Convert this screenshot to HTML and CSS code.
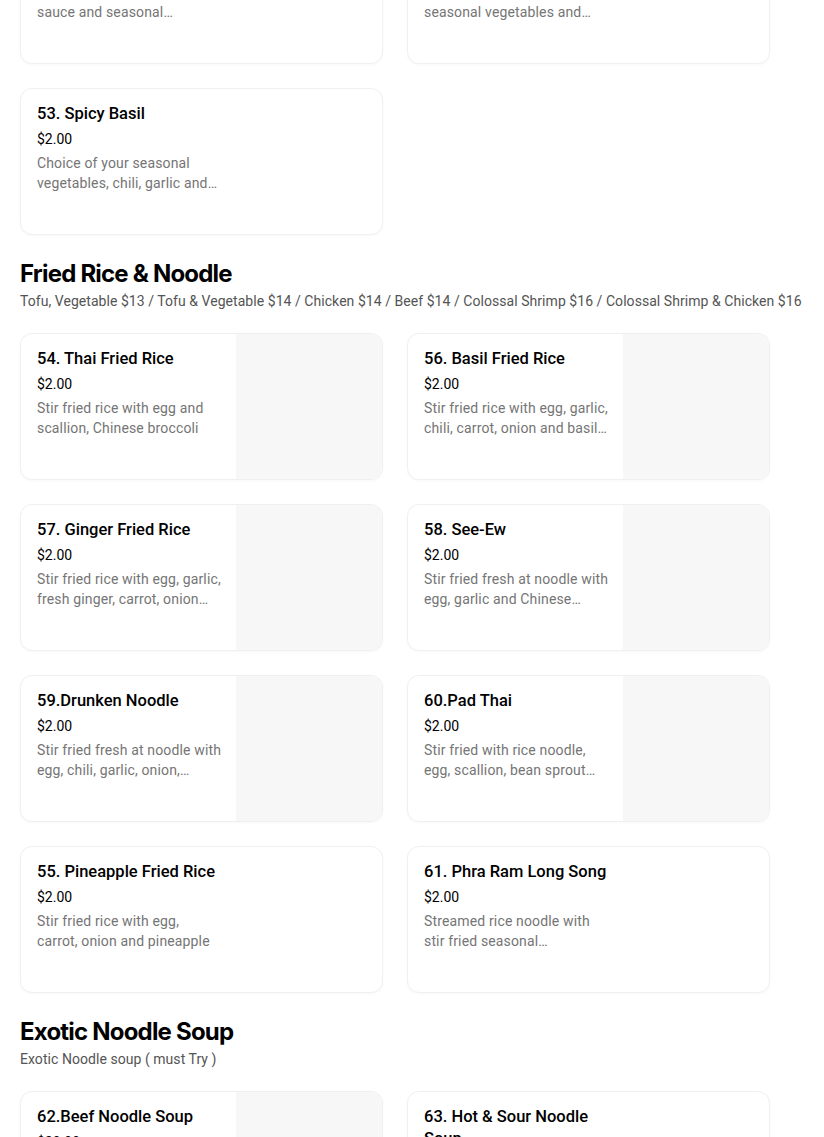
FILE: index.html
```html
<!DOCTYPE html>
<html lang="en">
<head>
<meta charset="utf-8">
<title>Menu</title>
<link rel="stylesheet" href="styles.css">
</head>
<body>
<main class="menu">
  <section class="category category--cut">
    <div class="grid">
      <article class="card">
        <div class="info">
          <h3 class="title">51. Garlic Sauce</h3>
          <div class="price">$2.00</div>
          <p class="desc">Stir fried with garlic pepper sauce and seasonal vegetables on the side</p>
        </div>
      </article>
      <article class="card">
        <div class="info">
          <h3 class="title">52. Ginger Sauce</h3>
          <div class="price">$2.00</div>
          <p class="desc">Stir fried with ginger, onion, seasonal vegetables and mushroom</p>
        </div>
      </article>
      <article class="card">
        <div class="info">
          <h3 class="title">53. Spicy Basil</h3>
          <div class="price">$2.00</div>
          <p class="desc">Choice of your seasonal vegetables, chili, garlic and basil leaves</p>
        </div>
      </article>
    </div>
  </section>

  <section class="category">
    <h2 class="cat-title">Fried Rice &amp; Noodle</h2>
    <p class="cat-sub">Tofu, Vegetable $13 / Tofu &amp; Vegetable $14 / Chicken $14 / Beef $14 / Colossal Shrimp $16 / Colossal Shrimp &amp; Chicken $16</p>
    <div class="grid">
      <article class="card">
        <div class="info">
          <h3 class="title">54. Thai Fried Rice</h3>
          <div class="price">$2.00</div>
          <p class="desc">Stir fried rice with egg and scallion, Chinese broccoli</p>
        </div>
        <div class="thumb"></div>
      </article>
      <article class="card">
        <div class="info">
          <h3 class="title">56. Basil Fried Rice</h3>
          <div class="price">$2.00</div>
          <p class="desc">Stir fried rice with egg, garlic, chili, carrot, onion and basil leaves</p>
        </div>
        <div class="thumb"></div>
      </article>
      <article class="card">
        <div class="info">
          <h3 class="title">57. Ginger Fried Rice</h3>
          <div class="price">$2.00</div>
          <p class="desc">Stir fried rice with egg, garlic, fresh ginger, carrot, onion and scallion</p>
        </div>
        <div class="thumb"></div>
      </article>
      <article class="card">
        <div class="info">
          <h3 class="title">58. See-Ew</h3>
          <div class="price">$2.00</div>
          <p class="desc">Stir fried fresh at noodle with egg, garlic and Chinese broccoli in sweet soy sauce</p>
        </div>
        <div class="thumb"></div>
      </article>
      <article class="card">
        <div class="info">
          <h3 class="title">59.Drunken Noodle</h3>
          <div class="price">$2.00</div>
          <p class="desc">Stir fried fresh at noodle with egg, chili, garlic, onion, tomato and basil leaves</p>
        </div>
        <div class="thumb"></div>
      </article>
      <article class="card">
        <div class="info">
          <h3 class="title">60.Pad Thai</h3>
          <div class="price">$2.00</div>
          <p class="desc">Stir fried with rice noodle, egg, scallion, bean sprout and ground peanuts</p>
        </div>
        <div class="thumb"></div>
      </article>
      <article class="card">
        <div class="info">
          <h3 class="title">55. Pineapple Fried Rice</h3>
          <div class="price">$2.00</div>
          <p class="desc">Stir fried rice with egg, carrot, onion and pineapple</p>
        </div>
      </article>
      <article class="card">
        <div class="info">
          <h3 class="title">61. Phra Ram Long Song</h3>
          <div class="price">$2.00</div>
          <p class="desc">Streamed rice noodle with stir fried seasonal vegetables topped with peanut sauce</p>
        </div>
      </article>
    </div>
  </section>

  <section class="category">
    <h2 class="cat-title">Exotic Noodle Soup</h2>
    <p class="cat-sub">Exotic Noodle soup ( must Try )</p>
    <div class="grid">
      <article class="card">
        <div class="info">
          <h3 class="title">62.Beef Noodle Soup</h3>
          <div class="price">$20.00</div>
          <p class="desc">Rice noodle soup with braised beef, bean sprout and Chinese broccoli</p>
        </div>
        <div class="thumb"></div>
      </article>
      <article class="card">
        <div class="info">
          <h3 class="title">63. Hot &amp; Sour Noodle Soup</h3>
          <div class="price">$20.00</div>
          <p class="desc">Rice noodle soup with ground peanut, chili and lime</p>
        </div>
      </article>
    </div>
  </section>
</main>
</body>
</html>
```

FILE: styles.css
```css
* {
  box-sizing: border-box;
}

html, body {
  margin: 0;
  padding: 0;
  background: #ffffff;
}

body {
  font-family: Roboto, "Liberation Sans", sans-serif;
  color: #000000;
  overflow: hidden;
}

.menu {
  padding: 0 20px;
  margin-top: -83px;
}

.category {
  padding-top: 23px;
}

.category--cut {
  padding-top: 0;
}

.cat-title {
  margin: 0;
  font-family: Inter, "Liberation Sans", sans-serif;
  font-size: 24px;
  line-height: 32px;
  font-weight: 700;
  letter-spacing: -0.8px;
}

.cat-sub {
  margin: 1px 0 22px;
  font-size: 14px;
  line-height: 20px;
  color: #545454;
  white-space: nowrap;
  letter-spacing: 0.05px;
}

.grid {
  display: grid;
  grid-template-columns: repeat(2, 363px);
  gap: 24px;
}

.card {
  display: flex;
  height: 147px;
  border: 1px solid #f0f0f0;
  border-radius: 12px;
  box-shadow: 0 1px 3px rgba(0, 0, 0, 0.03);
  overflow: hidden;
  background: #fff;
}

.info {
  width: 201px;
  flex: none;
  padding: 14px 0 0 16px;
}

.title {
  margin: 0;
  font-size: 16.5px;
  line-height: 22px;
  font-weight: 500;
}

.price {
  margin-top: 4px;
  font-size: 14px;
  line-height: 20px;
}

.desc {
  margin: 4px 0 0;
  font-size: 14px;
  line-height: 20px;
  color: #757575;
  letter-spacing: 0.15px;
  display: -webkit-box;
  -webkit-line-clamp: 2;
  -webkit-box-orient: vertical;
  overflow: hidden;
}

.thumb {
  flex: none;
  width: 146px;
  margin-left: auto;
  background: #f7f7f7;
}
```
